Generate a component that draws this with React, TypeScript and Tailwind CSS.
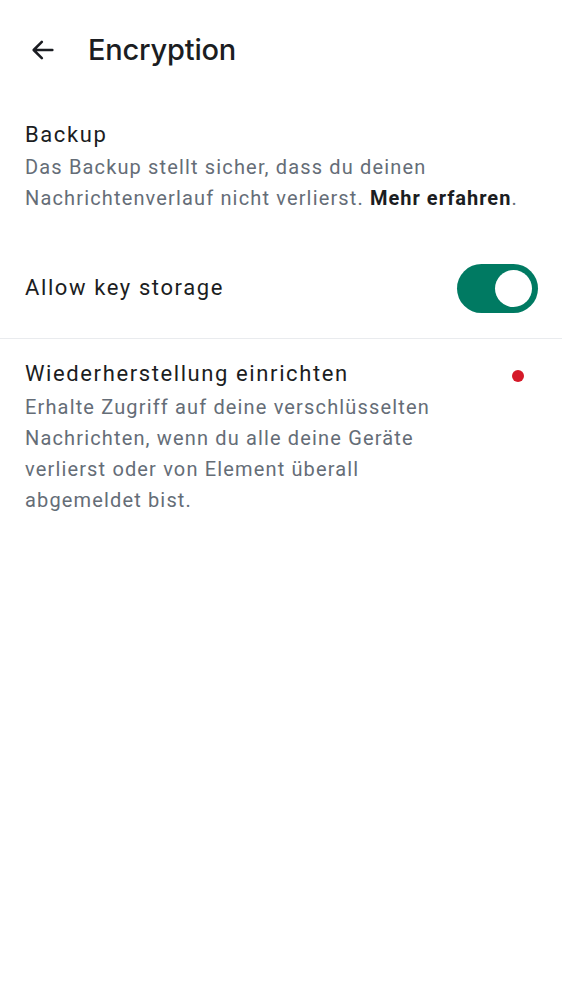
import React from "react";

export default function App() {
  return (
    <div className="w-[562px] h-[1000px] bg-white" style={{ fontFamily: "Roboto, sans-serif" }}>
      <div className="flex items-center h-[100px] pl-[29px]">
        <svg width="28" height="28" viewBox="0 0 24 24" fill="none">
          <path d="M20 12H4.5M11 5l-7 7 7 7" stroke="#1b1d22" strokeWidth="2.2" strokeLinecap="round" strokeLinejoin="round" />
        </svg>
        <div className="ml-[31px] text-[29px] font-medium text-[#1b1d22] tracking-[-0.2px]" style={{ fontFamily: "Inter, sans-serif" }}>
          Encryption
        </div>
      </div>

      <div className="px-[25px] pt-[20px]">
        <div className="text-[22px] leading-[30px] tracking-[1.6px] text-[#1b1d22]">Backup</div>
        <div className="text-[20px] leading-[31px] tracking-[1.15px] text-[#656d77] mt-[2px]">
          Das Backup stellt sicher, dass du deinen Nachrichtenverlauf nicht verlierst.{" "}
          <span className="font-bold tracking-[1px] text-[#1b1d22]">Mehr erfahren</span>.
        </div>
      </div>

      <div className="border-b border-[#e9ebee] pb-[20px] mt-[44px]">
        <div className="flex items-center justify-between px-[25px] h-[60px]">
          <div className="text-[22px] tracking-[1.6px] text-[#1b1d22] -mt-[2px]">Allow key storage</div>
          <div className="w-[81px] h-[49px] rounded-full bg-[#007a62] flex items-center justify-end pr-[6px] -mr-[1px]">
            <div className="w-[37px] h-[37px] rounded-full bg-white" />
          </div>
        </div>
      </div>

      <div className="flex px-[25px] pt-[19px]">
        <div className="flex-1">
          <div className="text-[22px] leading-[32px] tracking-[1.6px] text-[#1b1d22]">Wiederherstellung einrichten</div>
          <div className="w-[415px] text-[20px] leading-[31px] tracking-[1.15px] text-[#656d77] mt-[2px]">
            Erhalte Zugriff auf deine verschlüsselten Nachrichten, wenn du alle deine Geräte verlierst oder von Element überall abgemeldet bist.
          </div>
        </div>
        <div className="w-[12px] h-[12px] rounded-full bg-[#d51928] mt-[12px] mr-[13px]" />
      </div>
    </div>
  );
}
